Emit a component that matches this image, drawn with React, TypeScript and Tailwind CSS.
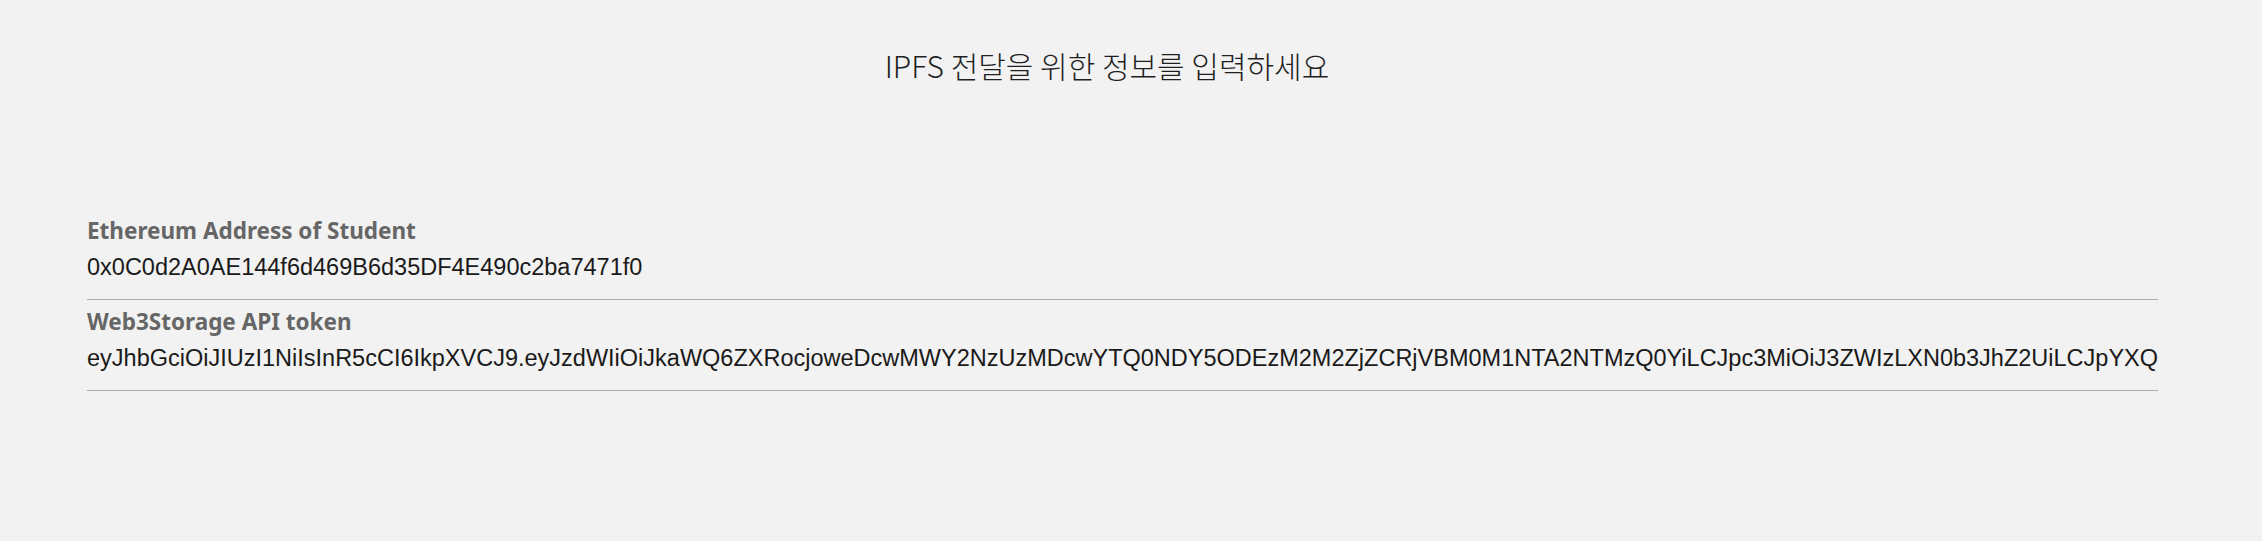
import { useState } from 'react';

// ── Field ─────────────────────────────────────────────────────────────

function Field({
  label,
  value,
  onChange,
}: {
  label: string;
  value: string;
  onChange: (v: string) => void;
}) {
  return (
    <div className="border-b border-[#ababab] pb-[18px] mb-[11px]">
      <label
        className="block text-[22.5px] leading-[22px] font-bold text-[#666666] mb-[11px]"
        style={{ fontFamily: '"Noto Sans", "Noto Sans CJK KR", sans-serif' }}
      >
        {label}
      </label>
      <input
        type="text"
        value={value}
        onChange={(e) => onChange(e.target.value)}
        className="block w-full h-[28px] p-0 bg-transparent border-0 outline-none text-[23.5px] leading-[28px] text-[#1a1a1a]"
        style={{ fontFamily: '"Liberation Sans", Arial, sans-serif' }}
      />
    </div>
  );
}

// ── App ───────────────────────────────────────────────────────────────

export default function App() {
  const [address, setAddress] = useState('0x0C0d2A0AE144f6d469B6d35DF4E490c2ba7471f0');
  const [token, setToken] = useState(
    'eyJhbGciOiJIUzI1NiIsInR5cCI6IkpXVCJ9.eyJzdWIiOiJkaWQ6ZXRocjoweDcwMWY2NzUzMDcwYTQ0NDY5ODEzM2M2ZjZCRjVBM0M1NTA2NTMzQ0YiLCJpc3MiOiJ3ZWIzLXN0b3JhZ2UiLCJpYXQiOjE2NjY1MTQ2NzI0NTEsIm5hbWUiOiJpcGZzIn0.kH2c8uXz1bq9QmXo'
  );

  return (
    <div className="min-h-[541px] w-full bg-[#f2f2f2]">
      {/* Title */}
      <div className="flex justify-center pt-[51px] pr-[48px]">
        <h1
          className="text-[30px] leading-[28px] font-light text-[#1f1f1f]"
          style={{ fontFamily: '"Noto Sans CJK KR", "Noto Sans", sans-serif' }}
        >
          IPFS 전달을 위한 정보를 입력하세요
        </h1>
      </div>

      {/* Form */}
      <div className="ml-[87px] w-[2071px] mt-[141px]">
        <Field label="Ethereum Address of Student" value={address} onChange={setAddress} />
        <Field label="Web3Storage API token" value={token} onChange={setToken} />
      </div>
    </div>
  );
}
